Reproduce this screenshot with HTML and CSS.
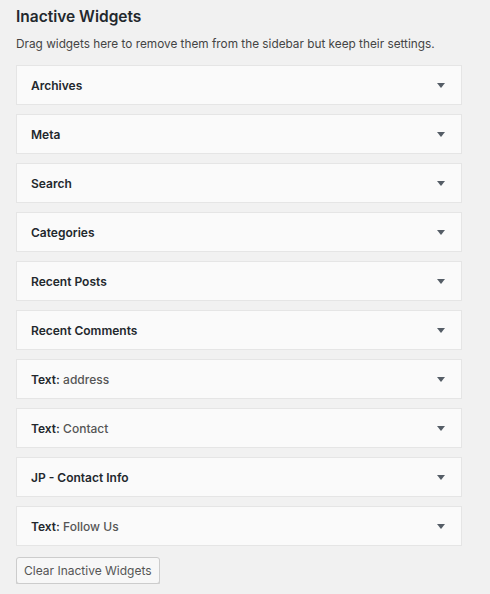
FILE: index.html
```html
<!DOCTYPE html>
<html>
<head>
<meta charset="utf-8">
<link rel="stylesheet" href="styles.css">
</head>
<body>
<div class="sidebar">
  <h2 class="title">Inactive Widgets</h2>
  <p class="desc">Drag widgets here to remove them from the sidebar but keep their settings.</p>
  <div class="list">
    <div class="widget"><span class="name">Archives</span><span class="arrow"></span></div>
    <div class="widget"><span class="name">Meta</span><span class="arrow"></span></div>
    <div class="widget"><span class="name">Search</span><span class="arrow"></span></div>
    <div class="widget"><span class="name">Categories</span><span class="arrow"></span></div>
    <div class="widget"><span class="name">Recent Posts</span><span class="arrow"></span></div>
    <div class="widget"><span class="name">Recent Comments</span><span class="arrow"></span></div>
    <div class="widget"><span class="name">Text:<span class="sub"> address</span></span><span class="arrow"></span></div>
    <div class="widget"><span class="name">Text:<span class="sub"> Contact</span></span><span class="arrow"></span></div>
    <div class="widget"><span class="name">JP - Contact Info</span><span class="arrow"></span></div>
    <div class="widget"><span class="name">Text:<span class="sub"> Follow Us</span></span><span class="arrow"></span></div>
  </div>
  <button class="btn">Clear Inactive Widgets</button>
</div>
</body>
</html>
```

FILE: styles.css
```css
html, body {
  margin: 0;
  padding: 0;
  background: #f1f1f1;
}
body {
  font-family: Inter, "Liberation Sans", sans-serif;
  color: #23282d;
}
.sidebar {
  width: 446px;
  padding: 6px 0 0 16px;
}
.title {
  margin: 0;
  font-size: 15.5px;
  font-weight: 600;
  line-height: 22px;
  color: #23282d;
}
.desc {
  margin: 7px 0 0;
  font-size: 11.8px;
  line-height: 18px;
  color: #444;
}
.list {
  margin-top: 12px;
  display: flex;
  flex-direction: column;
  gap: 9px;
}
.widget {
  height: 38px;
  border: 1px solid #e5e5e5;
  background: #fafafa;
  display: flex;
  align-items: center;
  justify-content: space-between;
  padding: 0 16px 0 14px;
  box-sizing: content-box;
}
.name {
  font-size: 12px;
  font-weight: 600;
  color: #23282d;
  line-height: 18px;
  padding-top: 2px;
}
.sub {
  font-weight: 500;
  color: #555;
}
.arrow {
  width: 0;
  height: 0;
  border-left: 4px solid transparent;
  border-right: 4px solid transparent;
  border-top: 5px solid #555d66;
  margin-top: 1px;
}
.btn {
  display: block;
  margin-top: 11px;
  height: 27px;
  padding: 0 7px;
  white-space: nowrap;
  font-family: Inter, "Liberation Sans", sans-serif;
  font-size: 12px;
  color: #555;
  background: #f7f7f7;
  border: 1px solid #ccc;
  border-radius: 3px;
  box-shadow: 0 1px 0 #ccc;
}
```
